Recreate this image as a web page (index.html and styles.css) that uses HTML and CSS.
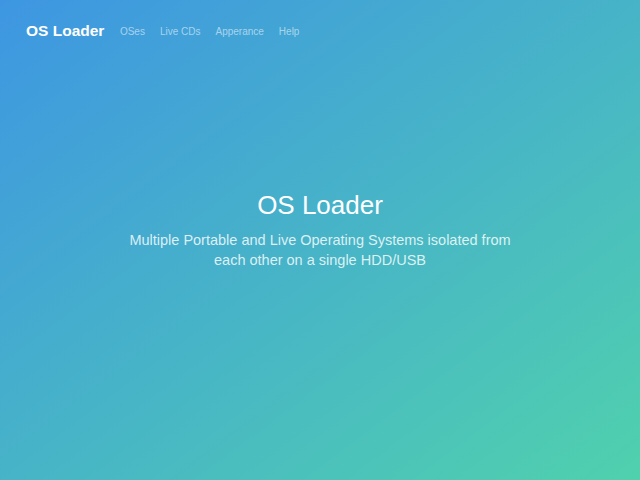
FILE: index.html
```html
<!DOCTYPE html>
<html>
<head>
<meta charset="utf-8">
<link rel="stylesheet" href="styles.css">
</head>
<body>
<div class="page">
  <nav class="navbar">
    <a class="brand" href="#">OS Loader</a>
    <ul class="nav">
      <li><a href="#">OSes</a></li>
      <li><a href="#">Live CDs</a></li>
      <li><a href="#">Apperance</a></li>
      <li><a href="#">Help</a></li>
    </ul>
  </nav>
  <main class="hero">
    <h1 class="title">OS Loader</h1>
    <p class="lead">Multiple Portable and Live Operating Systems isolated from each other on a single HDD/USB</p>
  </main>
</div>
</body>
</html>
```
FILE: styles.css
```css
html, body {
  margin: 0;
  padding: 0;
  height: 100%;
}
body {
  font-family: "Liberation Sans", Arial, sans-serif;
  color: #fff;
  background: linear-gradient(to bottom right, #3e96e2, #50d1ad);
}
.page {
  height: 100%;
  display: flex;
  flex-direction: column;
}
.navbar {
  display: flex;
  align-items: center;
  padding: 20px 26px 0 26px;
  height: 22px;
}
.brand {
  font-size: 15.5px;
  font-weight: bold;
  color: #fff;
  text-decoration: none;
  margin-right: 8px;
}
.nav {
  display: flex;
  list-style: none;
  margin: 0;
  padding: 0;
}
.nav a {
  display: block;
  padding: 0 7.5px;
  font-size: 10px;
  color: rgba(255, 255, 255, 0.55);
  text-decoration: none;
}
.hero {
  display: flex;
  flex-direction: column;
  align-items: center;
  text-align: center;
  padding-top: 147px;
}
.title {
  margin: 0;
  font-size: 26px;
  font-weight: normal;
  line-height: 32px;
}
.lead {
  margin: 9px 0 0 0;
  width: 390px;
  font-size: 14.5px;
  line-height: 20px;
  color: rgba(255, 255, 255, 0.82);
}
```
